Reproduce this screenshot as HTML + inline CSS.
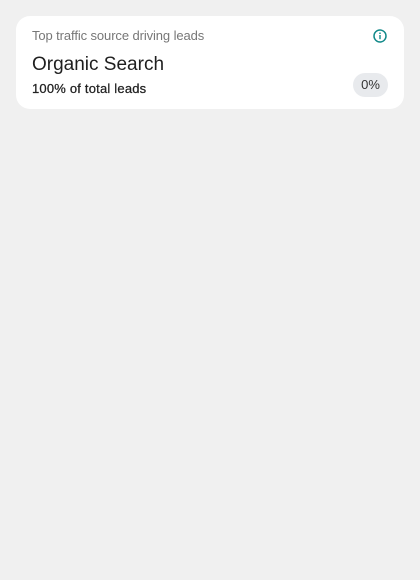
<!DOCTYPE html>
<html><head><meta charset="utf-8"><style>
html,body{margin:0;padding:0;background:#f0f0f0;width:420px;height:580px;overflow:hidden;font-family:"Liberation Sans",sans-serif;}
.card{position:absolute;left:16px;top:16px;width:388px;height:93px;background:#fff;border-radius:14px;}
.t{position:absolute;left:16px;top:12px;font-size:13px;color:#777;letter-spacing:-0.1px;}
.h{position:absolute;left:16px;top:38px;font-size:19px;color:#1f1f1f;}
.s{position:absolute;left:16px;top:65px;font-size:13px;color:#222;letter-spacing:0.2px;-webkit-text-stroke:0.25px #222;}
.pill{position:absolute;left:337px;top:57px;width:35px;height:24px;border-radius:12px;background:#e8eaed;font-size:13px;color:#333;text-align:center;line-height:24px;}
svg{position:absolute;left:357px;top:13px;}
</style></head><body>
<div class="card">
<div class="t">Top traffic source driving leads</div>
<svg width="14" height="14" viewBox="0 0 14 14"><circle cx="7" cy="7" r="6" fill="none" stroke="#138a8a" stroke-width="1.5"/><rect x="6.3" y="6" width="1.4" height="4.2" fill="#138a8a"/><circle cx="7" cy="4.2" r="0.85" fill="#138a8a"/></svg>
<div class="h">Organic Search</div>
<div class="s">100% of total leads</div>
<div class="pill">0%</div>
</div>
</body></html>
